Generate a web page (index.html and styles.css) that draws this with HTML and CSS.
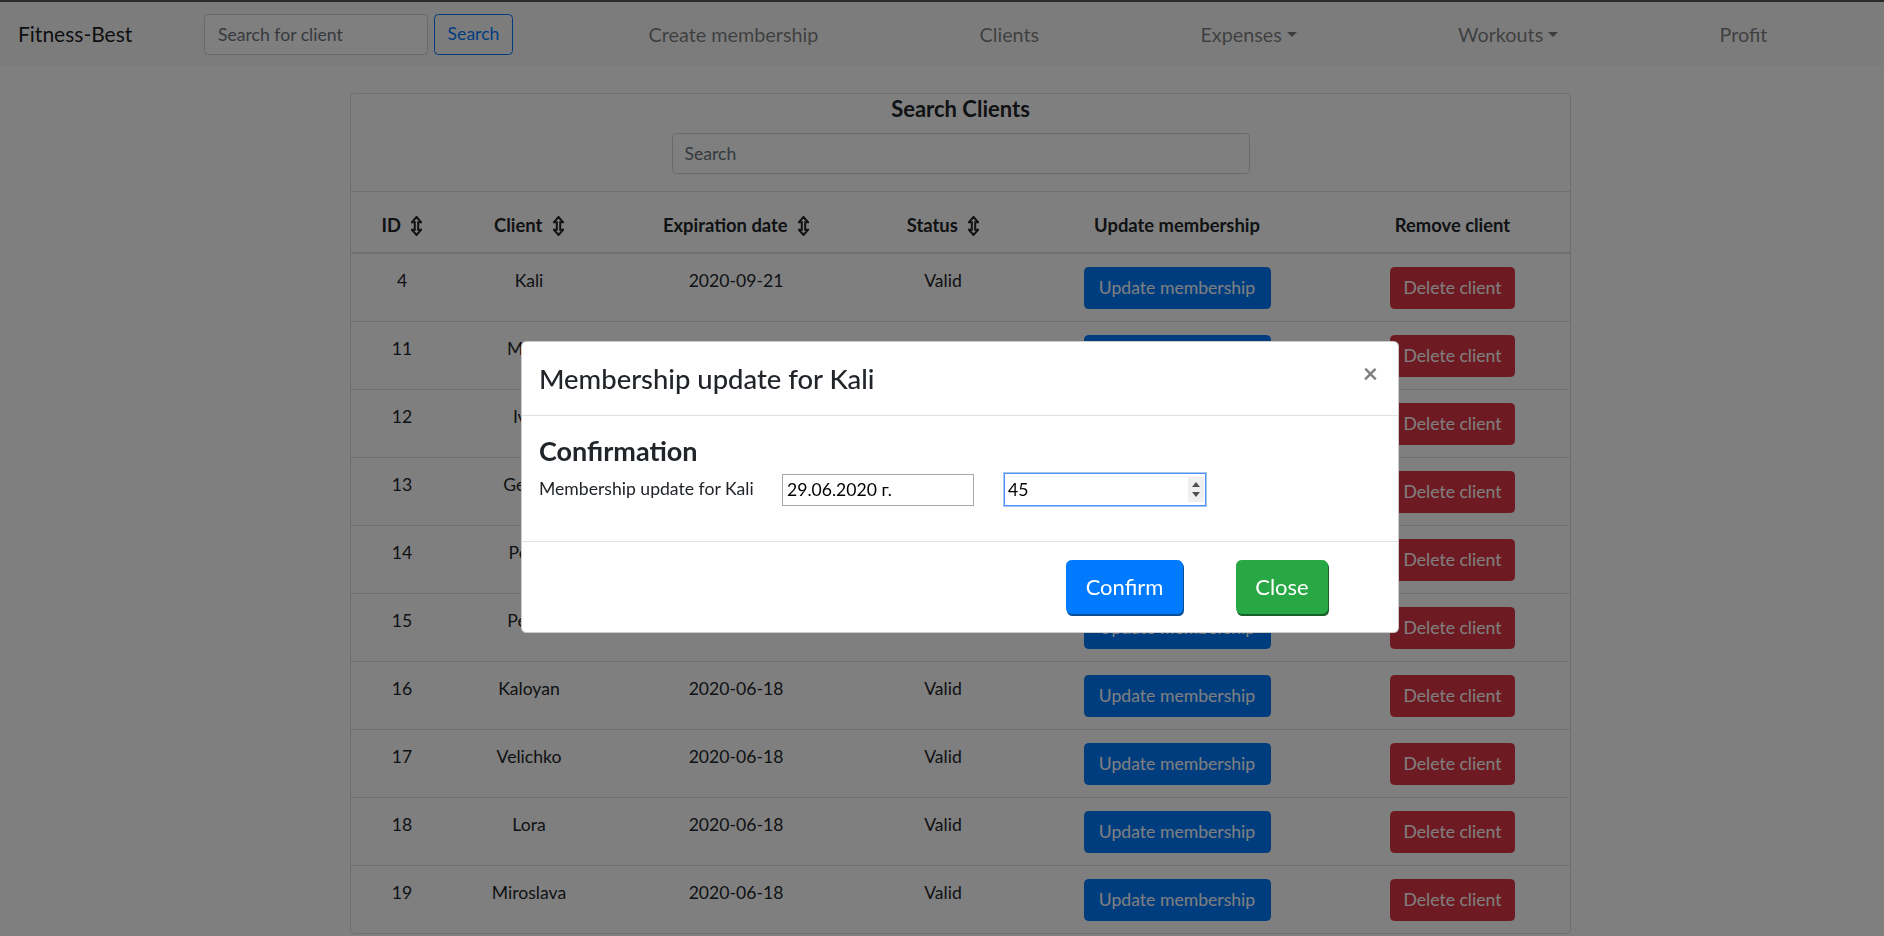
FILE: index.html
```html
<!DOCTYPE html>
<html lang="en">
<head>
<meta charset="utf-8">
<title>Fitness-Best</title>
<link rel="stylesheet" href="styles.css">
</head>
<body>
<nav class="navbar">
  <a class="brand" href="#">Fitness-Best</a>
  <form class="nav-search">
    <input class="nav-input" type="text" placeholder="Search for client">
    <button class="btn-search" type="button">Search</button>
  </form>
  <ul class="nav-links">
    <li><a href="#">Create membership</a></li>
    <li><a href="#">Clients</a></li>
    <li><a href="#" class="dropdown">Expenses</a></li>
    <li><a href="#" class="dropdown">Workouts</a></li>
    <li><a href="#">Profit</a></li>
  </ul>
</nav>

<main class="content">
  <div class="card">
    <div class="card-header">
      <h5 class="card-title">Search Clients</h5>
      <input class="search-input" type="text" placeholder="Search">
    </div>
    <table class="clients">
      <colgroup>
        <col class="c-id"><col class="c-client"><col class="c-date"><col class="c-status"><col class="c-update"><col class="c-remove">
      </colgroup>
      <thead>
        <tr>
          <th>ID <svg class="sort" viewBox="0 0 11 20"><path d="M5.5 1 L10 6.2 L7.2 6.2 L7.2 13.8 L10 13.8 L5.5 19 L1 13.8 L3.8 13.8 L3.8 6.2 L1 6.2 Z"/></svg></th>
          <th>Client <svg class="sort" viewBox="0 0 11 20"><path d="M5.5 1 L10 6.2 L7.2 6.2 L7.2 13.8 L10 13.8 L5.5 19 L1 13.8 L3.8 13.8 L3.8 6.2 L1 6.2 Z"/></svg></th>
          <th>Expiration date <svg class="sort" viewBox="0 0 11 20"><path d="M5.5 1 L10 6.2 L7.2 6.2 L7.2 13.8 L10 13.8 L5.5 19 L1 13.8 L3.8 13.8 L3.8 6.2 L1 6.2 Z"/></svg></th>
          <th>Status <svg class="sort" viewBox="0 0 11 20"><path d="M5.5 1 L10 6.2 L7.2 6.2 L7.2 13.8 L10 13.8 L5.5 19 L1 13.8 L3.8 13.8 L3.8 6.2 L1 6.2 Z"/></svg></th>
          <th>Update membership</th>
          <th>Remove client</th>
        </tr>
      </thead>
      <tbody>
        <tr><td>4</td><td>Kali</td><td>2020-09-21</td><td>Valid</td><td><span class="btn btn-primary">Update membership</span></td><td><span class="btn btn-danger">Delete client</span></td></tr>
        <tr><td>11</td><td>Maria</td><td>2020-06-18</td><td>Valid</td><td><span class="btn btn-primary">Update membership</span></td><td><span class="btn btn-danger">Delete client</span></td></tr>
        <tr><td>12</td><td>Ivan</td><td>2020-06-18</td><td>Valid</td><td><span class="btn btn-primary">Update membership</span></td><td><span class="btn btn-danger">Delete client</span></td></tr>
        <tr><td>13</td><td>Georgi</td><td>2020-06-18</td><td>Valid</td><td><span class="btn btn-primary">Update membership</span></td><td><span class="btn btn-danger">Delete client</span></td></tr>
        <tr><td>14</td><td>Petar</td><td>2020-06-18</td><td>Valid</td><td><span class="btn btn-primary">Update membership</span></td><td><span class="btn btn-danger">Delete client</span></td></tr>
        <tr><td>15</td><td>Petya</td><td>2020-06-18</td><td>Valid</td><td><span class="btn btn-primary">Update membership</span></td><td><span class="btn btn-danger">Delete client</span></td></tr>
        <tr><td>16</td><td>Kaloyan</td><td>2020-06-18</td><td>Valid</td><td><span class="btn btn-primary">Update membership</span></td><td><span class="btn btn-danger">Delete client</span></td></tr>
        <tr><td>17</td><td>Velichko</td><td>2020-06-18</td><td>Valid</td><td><span class="btn btn-primary">Update membership</span></td><td><span class="btn btn-danger">Delete client</span></td></tr>
        <tr><td>18</td><td>Lora</td><td>2020-06-18</td><td>Valid</td><td><span class="btn btn-primary">Update membership</span></td><td><span class="btn btn-danger">Delete client</span></td></tr>
        <tr><td>19</td><td>Miroslava</td><td>2020-06-18</td><td>Valid</td><td><span class="btn btn-primary">Update membership</span></td><td><span class="btn btn-danger">Delete client</span></td></tr>
      </tbody>
    </table>
  </div>
</main>

<div class="backdrop"></div>

<div class="modal">
  <div class="modal-header">
    <h4 class="modal-title">Membership update for Kali</h4>
    <span class="close">&times;</span>
  </div>
  <div class="modal-body">
    <h4 class="confirm-title">Confirmation</h4>
    <div class="form-row">
      <label class="form-label">Membership update for Kali</label>
      <input class="date-input" type="text" value="29.06.2020 г." readonly>
      <div class="number-wrap">
        <input class="number-input" type="text" value="45" readonly>
        <span class="spinner"><span class="spin-up"></span><span class="spin-down"></span></span>
      </div>
    </div>
  </div>
  <div class="modal-footer">
    <span class="btn-lg btn-confirm">Confirm</span>
    <span class="btn-lg btn-close">Close</span>
  </div>
</div>
</body>
</html>
```

FILE: styles.css
```css
html, body {
  margin: 0;
  height: 100%;
  overflow: hidden;
}

body {
  font-family: Lato, "Open Sans", sans-serif;
  font-size: 17.6px;
  line-height: 1.5;
  color: #212529;
  background: #fff;
  border-top: 2px solid #555;
  box-sizing: border-box;
}

/* ---------- navbar ---------- */
.navbar {
  display: flex;
  align-items: center;
  height: 64px;
  padding: 0 36px 0 18px;
  background: #f8f9fa;
}

.brand {
  flex: none;
  width: 186px;
  font-size: 21px;
  color: rgba(0, 0, 0, .9);
  text-decoration: none;
}

.nav-search {
  display: flex;
  gap: 6px;
  margin: 0;
}

.nav-input {
  width: 224px;
  height: 41px;
  box-sizing: border-box;
  padding: 0 13px;
  border: 1px solid #ced4da;
  border-radius: 4.4px;
  font: inherit;
  color: #495057;
  background: #fff;
}

.nav-input::placeholder,
.search-input::placeholder {
  color: #6c757d;
}

.btn-search {
  width: 79px;
  height: 41px;
  box-sizing: border-box;
  border: 1px solid #007bff;
  border-radius: 4.4px;
  background: transparent;
  color: #007bff;
  font: inherit;
  padding: 0;
}

.nav-links {
  display: flex;
  flex: 1;
  margin: 0 0 0 55px;
  padding: 0;
  list-style: none;
}

.nav-links li {
  flex: 1 1 auto;
  text-align: center;
  padding-top: 2px;
}

.nav-links a {
  font-size: 19.8px;
  color: rgba(0, 0, 0, .5);
  text-decoration: none;
}

.dropdown::after {
  content: "";
  display: inline-block;
  margin-left: .255em;
  vertical-align: .255em;
  border-top: .3em solid;
  border-right: .3em solid transparent;
  border-left: .3em solid transparent;
}

/* ---------- card ---------- */
.content {
  padding: 27px 0 0 350px;
}

.card {
  width: 1221px;
  box-sizing: border-box;
  border: 1px solid rgba(0, 0, 0, .125);
  border-radius: 4.4px;
}

.card-header {
  padding: 3px 0 17px;
  border-bottom: 1px solid rgba(0, 0, 0, .125);
  text-align: center;
}

.card-title {
  margin: 0;
  font-size: 22px;
  font-weight: 700;
  line-height: 24px;
}

.search-input {
  display: block;
  width: 578px;
  height: 41px;
  box-sizing: border-box;
  margin: 12px auto 0;
  padding: 0 12px;
  border: 1px solid #ced4da;
  border-radius: 4.4px;
  font: inherit;
  background: #fff;
}

/* ---------- table ---------- */
.clients {
  width: 100%;
  table-layout: fixed;
  border-collapse: separate;
  border-spacing: 0;
}

.c-id { width: 102px; }
.c-client { width: 152px; }
.c-date { width: 262px; }
.c-status { width: 152px; }
.c-update { width: 316px; }
.c-remove { width: 235px; }

.clients th {
  height: 61px;
  box-sizing: border-box;
  padding: 7px 4px 0;
  border-bottom: 1px solid #dee2e6;
  font-size: 18.4px;
  font-weight: 700;
  text-align: center;
  vertical-align: middle;
  white-space: nowrap;
}

.sort {
  width: 11px;
  height: 20px;
  margin-left: 6px;
  vertical-align: -4px;
}

.sort path {
  fill: none;
  stroke: #212529;
  stroke-width: 2;
  stroke-linejoin: miter;
}

.clients td {
  padding: 13px 4px 12px;
  border-top: 1px solid #dee2e6;
  text-align: center;
  vertical-align: top;
  line-height: 28px;
  white-space: nowrap;
}

.btn {
  display: inline-block;
  vertical-align: top;
  height: 42px;
  box-sizing: border-box;
  border: 1px solid transparent;
  border-radius: 4.4px;
  line-height: 40px;
  color: #fff;
  text-align: center;
}

.btn-primary {
  width: 187px;
  background: #007bff;
  border-color: #007bff;
}

.btn-danger {
  width: 125px;
  background: #dc3545;
  border-color: #dc3545;
}

/* ---------- modal ---------- */
.backdrop {
  position: fixed;
  inset: 0;
  background: rgba(0, 0, 0, .5);
  z-index: 1;
}

.modal {
  position: absolute;
  left: 521px;
  top: 341px;
  width: 878px;
  height: 292px;
  box-sizing: border-box;
  background: #fff;
  border: 1px solid rgba(0, 0, 0, .2);
  border-radius: 5.5px;
  z-index: 2;
}

.modal-header {
  display: flex;
  align-items: center;
  justify-content: space-between;
  height: 74px;
  box-sizing: border-box;
  padding: 2px 20px 0 17px;
  border-bottom: 1px solid #dee2e6;
}

.modal-title {
  margin: 0;
  font-size: 27.4px;
  font-weight: 500;
  line-height: 1.2;
}

.close {
  font-size: 26.4px;
  font-weight: 700;
  line-height: 1;
  color: #000;
  opacity: .5;
  margin-top: -12px;
}

.modal-body {
  height: 125px;
  box-sizing: border-box;
  padding: 19px 17px 0;
}

.confirm-title {
  margin: 0;
  font-size: 27px;
  font-weight: 700;
  line-height: 32px;
}

.form-row {
  display: flex;
  align-items: center;
  margin-top: 6px;
}

.form-label {
  width: 243px;
  flex: none;
}

.date-input {
  width: 192px;
  height: 32px;
  box-sizing: border-box;
  padding: 0 4px;
  border: 1px solid #a9a9a9;
  font: inherit;
  font-size: 17.6px;
  color: #000;
  background: #fff;
}

.number-wrap {
  position: relative;
  margin-left: 30px;
}

.number-input {
  display: block;
  width: 202px;
  height: 33px;
  box-sizing: border-box;
  padding: 0 3px;
  border: 1px solid #4d90fe;
  box-shadow: 0 0 0 1px #a9c7f2;
  outline: none;
  font: inherit;
  font-size: 17.6px;
  color: #000;
  background: #fff;
}

.spinner {
  position: absolute;
  right: 2px;
  top: 4px;
  width: 16px;
  height: 25px;
  background: #efefef;
}

.spin-up,
.spin-down {
  position: absolute;
  left: 4px;
  width: 0;
  height: 0;
  border-left: 4px solid transparent;
  border-right: 4px solid transparent;
}

.spin-up {
  top: 5px;
  border-bottom: 5px solid #505050;
}

.spin-down {
  bottom: 5px;
  border-top: 5px solid #505050;
}

.modal-footer {
  display: flex;
  align-items: center;
  justify-content: flex-end;
  gap: 53px;
  height: 90px;
  box-sizing: border-box;
  padding-right: 70px;
  border-top: 1px solid #dee2e6;
}

.btn-lg {
  display: inline-block;
  height: 54px;
  box-sizing: border-box;
  border-radius: 5.5px;
  font-size: 22px;
  line-height: 52px;
  color: #fff;
  text-align: center;
}

.btn-confirm {
  width: 117px;
  background: #007bff;
  border: 1px solid #007bff;
  box-shadow: 1px 2px 0 #0b4e96;
}

.btn-close {
  width: 92px;
  background: #28a745;
  border: 1px solid #28a745;
  box-shadow: 1px 2px 0 #18602a;
}
```
